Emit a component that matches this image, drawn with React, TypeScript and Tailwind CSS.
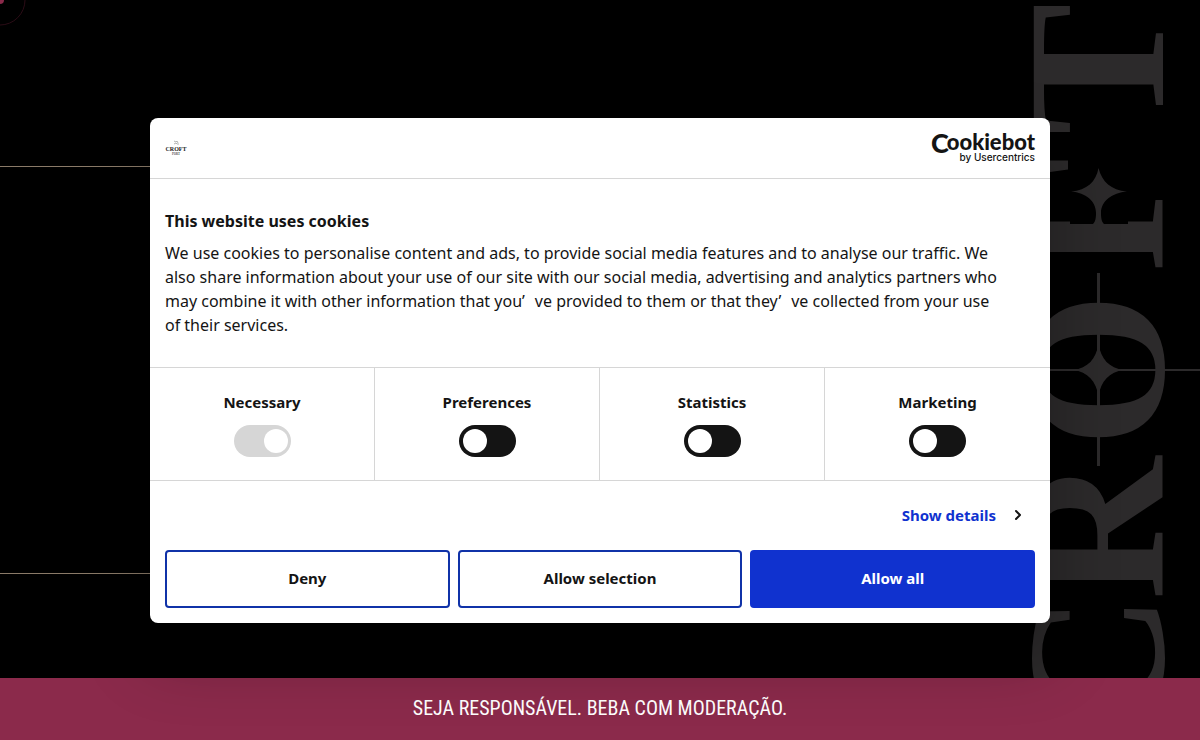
import { ChevronRight } from "lucide-react";

const choices = [
  { id: "necessary", label: "Necessary", locked: true },
  { id: "preferences", label: "Preferences", locked: false },
  { id: "statistics", label: "Statistics", locked: false },
  { id: "marketing", label: "Marketing", locked: false },
];

function Backdrop() {
  return (
    <>
      <svg className="absolute left-0 top-0" width="150" height="600" aria-hidden="true">
        <circle cx="0" cy="0" r="25" fill="none" stroke="#2b0c16" />
        <circle cx="0" cy="0" r="4" fill="#8a2a4a" />
        <path d="M0 166.500H150M0 573.500H150" stroke="#8a7a68" />
      </svg>
      <svg className="absolute right-0 top-0" width="180" height="740" viewBox="1020 0 180 740" aria-hidden="true">
        <g fill="#2c2a2b">
          <text
            transform="translate(1163 751) rotate(-90)"
            x="14 151 304 479 616"
            fontSize="198"
            className="font-['Liberation_Serif',serif] font-bold"
          >
            CROFT
          </text>
          <path d="M1070 165h58v59h-58z" fill="#000" />
          <path d="M1098.500 168C1102 182 1111 190 1127 191.500C1112 193 1101 201 1101 213C1101 219 1102 224 1106 225H1091C1095 224 1096 219 1096 213C1096 201 1086 193 1071 191.500C1087 190 1096 182 1098.500 168Z" />
          <path d="M1098.500 344C1101 359 1109 368 1124 370C1109 372 1101 381 1098.500 396C1096 381 1088 372 1073 370C1088 368 1096 359 1098.500 344Z" />
          <path d="M1097 273h3v193h-3zM1040 369h160v2h-160z" />
        </g>
      </svg>
    </>
  );
}

function CookieDialog() {
  return (
    <section
      role="dialog"
      aria-labelledby="cookie-title"
      className="w-full max-w-[900px] rounded-lg bg-white text-[#141414] shadow-[0_32px_68px_rgba(0,0,0,0.3)]"
    >
      <header className="flex h-[61px] items-center justify-between border-b border-[#d6d6d6] px-[15px]">
        <svg width="23" height="16" viewBox="0 0 23 16" role="img" aria-label="Croft Port">
          <path d="M9 1l2 1 1-1 1 2M9 4l2-1 1 1 2 0" fill="none" stroke="#b5b5b5" />
          <text x="11" y="11" textAnchor="middle" fontSize="6" fill="#222" className="font-['Liberation_Serif',serif] font-bold">
            CROFT
          </text>
          <text x="11" y="15" textAnchor="middle" fontSize="3" fill="#555" className="font-['Liberation_Serif',serif] font-bold">
            PORT
          </text>
        </svg>
        <a href="#cookiebot">
          <svg
            width="104"
            height="34"
            viewBox="0 0 104 34"
            fill="#141414"
            className="overflow-visible"
            role="img"
            aria-label="Cookiebot by Usercentrics"
          >
            <text x="104" y="19" textAnchor="end" fontSize="22" className="font-['Lato',sans-serif] font-black">
              <tspan fontSize="27" dy="3">
                C
              </tspan>
              <tspan dx="-2" dy="-3">
                ookiebot
              </tspan>
            </text>
            <text x="104" y="30" textAnchor="end" fontSize="10" className="font-['Inter',sans-serif] font-medium">
              by Usercentrics
            </text>
          </svg>
        </a>
      </header>

      <div className="px-[15px] py-[30px]">
        <h2 id="cookie-title" className="mb-2 text-base font-bold leading-6">
          This website uses cookies
        </h2>
        <p className="pr-7 text-base leading-6">
          We use cookies to personalise content and ads, to provide social media features and to analyse our traffic. We
          also share information about your use of our site with our social media, advertising and analytics partners who
          may combine it with other information that you<span className="mr-[10px]">’</span>ve provided to them or that
          they<span className="mr-[10px]">’</span>ve collected from your use of their services.
        </p>
      </div>

      <div className="grid grid-cols-4 divide-x divide-[#d6d6d6] border-y border-[#d6d6d6]">
        {choices.map((c) => (
          <label key={c.id} htmlFor={c.id} className="flex h-[112px] flex-col items-center pt-[22px]">
            <span className="mb-[11px] text-[15px] font-bold leading-6">{c.label}</span>
            <span className="relative flex">
              <input
                id={c.id}
                type="checkbox"
                role="switch"
                defaultChecked={c.locked}
                disabled={c.locked}
                className="peer h-8 w-[57px] appearance-none rounded-full bg-[#141414] disabled:bg-[#d6d6d6]"
              />
              <span className="pointer-events-none absolute left-1 top-1 size-6 rounded-full bg-white peer-checked:left-[30px]" />
            </span>
          </label>
        ))}
      </div>

      <div className="px-[15px] pb-[15px]">
        <div className="flex h-[69px] items-center justify-end pr-[9px]">
          <button type="button" className="flex items-center gap-[14px] text-[15px] font-bold text-[#1032cf]">
            Show details
            <ChevronRight size={16} strokeWidth={3} className="text-[#141414]" />
          </button>
        </div>
        <div className="grid grid-cols-3 gap-2 text-[15px] font-bold">
          <button type="button" className="h-[58px] rounded border-2 border-[#1032a8]">
            Deny
          </button>
          <button type="button" className="h-[58px] rounded border-2 border-[#1032a8]">
            Allow selection
          </button>
          <button type="button" className="h-[58px] rounded border-2 border-[#1032cf] bg-[#1032cf] text-white">
            Allow all
          </button>
        </div>
      </div>
    </section>
  );
}

export default function App() {
  return (
    <main className="relative flex min-h-screen flex-col justify-end overflow-hidden bg-black font-['Noto_Sans',sans-serif]">
      <Backdrop />
      <footer className="relative flex h-[62px] items-center justify-center bg-[#8b2a4b] pb-0.5 text-white">
        <p className="font-['Roboto_Condensed','Roboto',sans-serif] text-[20px]">
          SEJA RESPONSÁVEL. BEBA COM MODERAÇÃO.
        </p>
      </footer>
      <div className="absolute inset-0 flex items-center justify-center">
        <CookieDialog />
      </div>
    </main>
  );
}
